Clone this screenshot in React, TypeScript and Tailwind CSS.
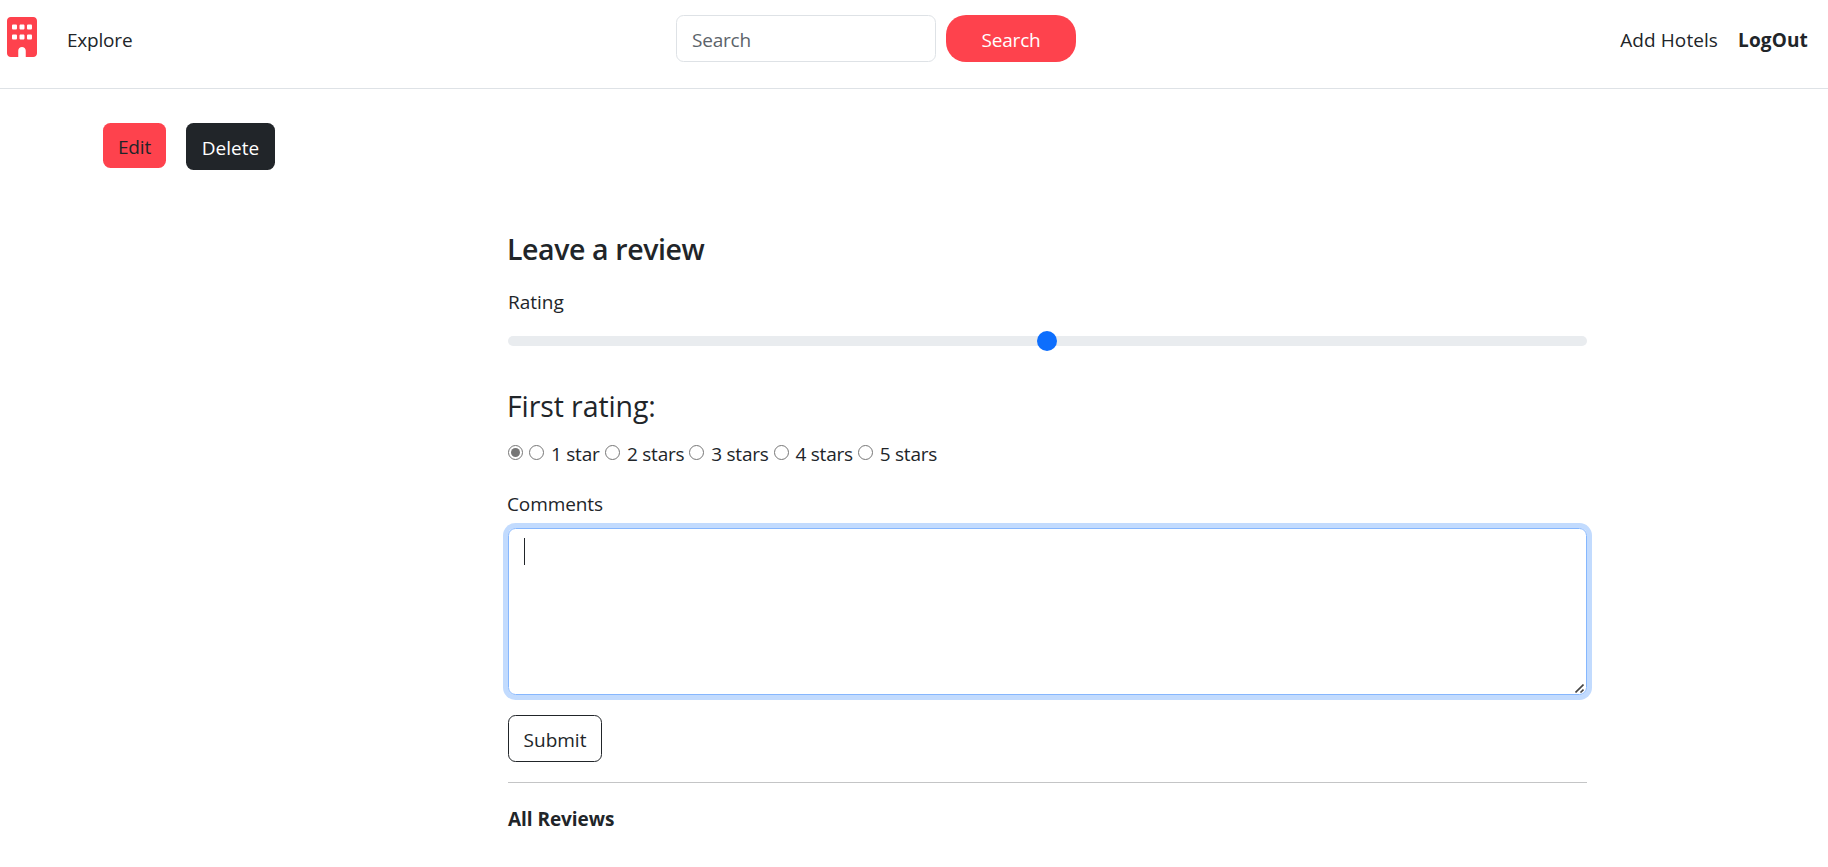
import { FaBuilding } from "react-icons/fa6";

const stars = [
  { label: "1 star", width: "w-[76px]" },
  { label: "2 stars", width: "w-[84.25px]" },
  { label: "3 stars", width: "w-[84.25px]" },
  { label: "4 stars", width: "w-[84.25px]" },
  { label: "5 stars", width: "w-[84.25px]" },
];

function Header() {
  return (
    <header className="flex h-[89px] items-start border-b border-[#dee2e6] pt-[15px] pr-5 pl-[7px]">
      <FaBuilding className="mt-0.5 h-10 w-[30px] text-[#fe424d]" />
      <a className="mt-2.5 ml-[30px] w-[65px] tracking-[-0.2px]">Explore</a>
      <form className="ml-[544px] flex gap-2.5">
        <input
          type="search"
          placeholder="Search"
          className="h-[47px] w-[260px] rounded-[7.5px] border border-[#dee2e6] pt-[9px] pr-4 pb-[7px] pl-[15px] leading-[29px] tracking-[-0.2px] placeholder:text-[#5c636a]"
        />
        <button
          type="button"
          className="h-[47px] w-[130px] rounded-[20px] bg-[#fe424d] pt-[3px] tracking-[-0.2px] text-white"
        >
          Search
        </button>
      </form>
      <nav className="mt-2.5 ml-auto flex gap-5">
        <a className="tracking-[0.08px]">Add Hotels</a>
        <a className="font-bold tracking-[0.15px]">LogOut</a>
      </nav>
    </header>
  );
}

export default function App() {
  return (
    <div className="min-h-[867px] bg-white font-['Open_Sans',sans-serif] text-[19px] leading-[30px] text-[#212529]">
      <Header />
      <main>
        <div className="mt-[34px] ml-[103px] flex items-start gap-5">
          <a className="h-[45px] w-[63px] rounded-[7.5px] bg-[#fe424d] pt-[9px] pl-[15px] tracking-[-0.2px]">
            Edit
          </a>
          <button
            type="button"
            className="h-[47px] w-[89px] rounded-[7.5px] bg-[#212529] pt-[3px] text-white"
          >
            Delete
          </button>
        </div>

        <section className="mt-[61px] ml-[508px] w-[1079px]">
          <h4 className="-ml-px text-[28.5px] leading-9 font-semibold tracking-[-0.4px]">
            Leave a review
          </h4>
          <label className="mt-5 block">Rating</label>
          <div className="mt-3.5 flex h-5 items-center">
            <div className="flex h-2.5 w-full items-center justify-center rounded-full bg-[#e9ecef]">
              <div className="mr-px size-5 rounded-full bg-[#0d6efd]" />
            </div>
          </div>

          <h4 className="-ml-px mt-[37px] text-[28.5px] leading-9 tracking-[-0.1px]">
            First rating:
          </h4>
          <div className="mt-[15px] flex h-[30px]">
            <input
              type="radio"
              name="rating"
              defaultChecked
              className="mt-1.5 mr-1.5 size-[15px] accent-[#767676]"
            />
            {stars.map((star) => (
              <label key={star.label} className={`flex ${star.width}`}>
                <input
                  type="radio"
                  name="rating"
                  className="mt-1.5 mr-[7px] size-[15px]"
                />
                <span className="tracking-[-0.25px] whitespace-nowrap">
                  {star.label}
                </span>
              </label>
            ))}
          </div>

          <label className="-ml-px mt-5 block tracking-[-0.1px]">
            Comments
          </label>
          <div className="relative mt-[9px] h-[167px]">
            <textarea className="block h-full w-full resize-none rounded-[7.5px] border border-[#86b7fe] px-[15px] py-2 shadow-[0_0_0_5px_#c2dbfe] outline-none" />
            <span className="absolute top-2.5 left-4 h-[27px] w-px bg-[#212529]" />
            <svg
              className="absolute right-[3px] bottom-[2px] h-[9px] w-[9px]"
              viewBox="0 0 9 9"
              stroke="#444"
              strokeWidth="1.6"
            >
              <path d="M0.5 8.5 8.5 0.5M5.5 8.5 8.5 5.5" />
            </svg>
          </div>

          <button
            type="button"
            className="mt-5 block h-[47px] w-[94px] rounded-[7.5px] border border-[#212529] pt-[3px]"
          >
            Submit
          </button>
          <div className="mt-5 h-px bg-[#c4c5c6]" />
          <p className="mt-[21px] font-bold tracking-[-0.05px]">All Reviews</p>
        </section>
      </main>
    </div>
  );
}
